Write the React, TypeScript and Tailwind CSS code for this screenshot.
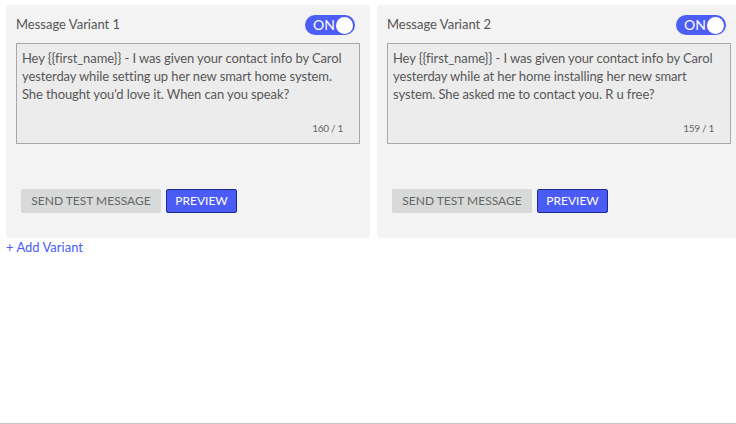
import React from 'react';

type Variant = {
  title: string;
  body: string;
  count: string;
};

const variants: Variant[] = [
  {
    title: 'Message Variant 1',
    body: "Hey {{first_name}} - I was given your contact info by Carol yesterday while setting up her new smart home system. She thought you'd love it. When can you speak?",
    count: '160 / 1',
  },
  {
    title: 'Message Variant 2',
    body: 'Hey {{first_name}} - I was given your contact info by Carol yesterday while at her home installing her new smart system. She asked me to contact you. R u free?',
    count: '159 / 1',
  },
];

const Toggle: React.FC = () => (
  <div className="flex items-center w-[50px] h-[20px] rounded-full bg-[#4c5ef6] pl-[8px] pr-[2px]">
    <span className="text-white text-[14px] leading-none flex-1">ON</span>
    <span className="w-[17px] h-[17px] rounded-full bg-white" />
  </div>
);

const VariantCard: React.FC<{ v: Variant }> = ({ v }) => (
  <div className="w-[364px] shrink-0 bg-[#f3f3f3] rounded-[4px] px-[10px] pt-[10px] pb-[25px]">
    <div className="flex items-center justify-between h-[20px] pr-[5px]">
      <span className="text-[13px] leading-[16px] text-[#555] -mt-[3px]">{v.title}</span>
      <Toggle />
    </div>
    <div className="mt-[8px] h-[101px] border border-[#a9a9a9] bg-[#ececec] px-[5px] pt-[5px] flex flex-col">
      <p className="text-[13px] leading-[18px] tracking-[-0.1px] text-[#585858] flex-1">{v.body}</p>
      <div className="text-right text-[10px] tracking-[-0.3px] text-[#666] pr-[11px] pb-[7px]">
        {v.count}
      </div>
    </div>
    <div className="mt-[45px] flex gap-[5px] px-[5px]">
      <button className="h-[24px] w-[140px] rounded-[2px] bg-[#d8d9d9] text-[12px] text-[#666] uppercase">
        Send Test Message
      </button>
      <button className="h-[24px] w-[71px] rounded-[2px] bg-[#4b5cf6] border border-[#1d2a8a] text-[12px] text-white uppercase">
        Preview
      </button>
    </div>
  </div>
);

const App: React.FC = () => {
  return (
    <div
      className="w-[736px] h-[424px] overflow-hidden bg-white border-b border-[#c6c6c6]"
      style={{ fontFamily: 'Lato, "Open Sans", Arial, sans-serif' }}
    >
      <div className="flex gap-[7px] pl-[6px] pt-[5px]">
        {variants.map((v) => (
          <VariantCard key={v.title} v={v} />
        ))}
      </div>
      <div className="pl-[6px] text-[13px] leading-[18px] text-[#4b5cf6]">+ Add Variant</div>
    </div>
  );
};

export default App;
